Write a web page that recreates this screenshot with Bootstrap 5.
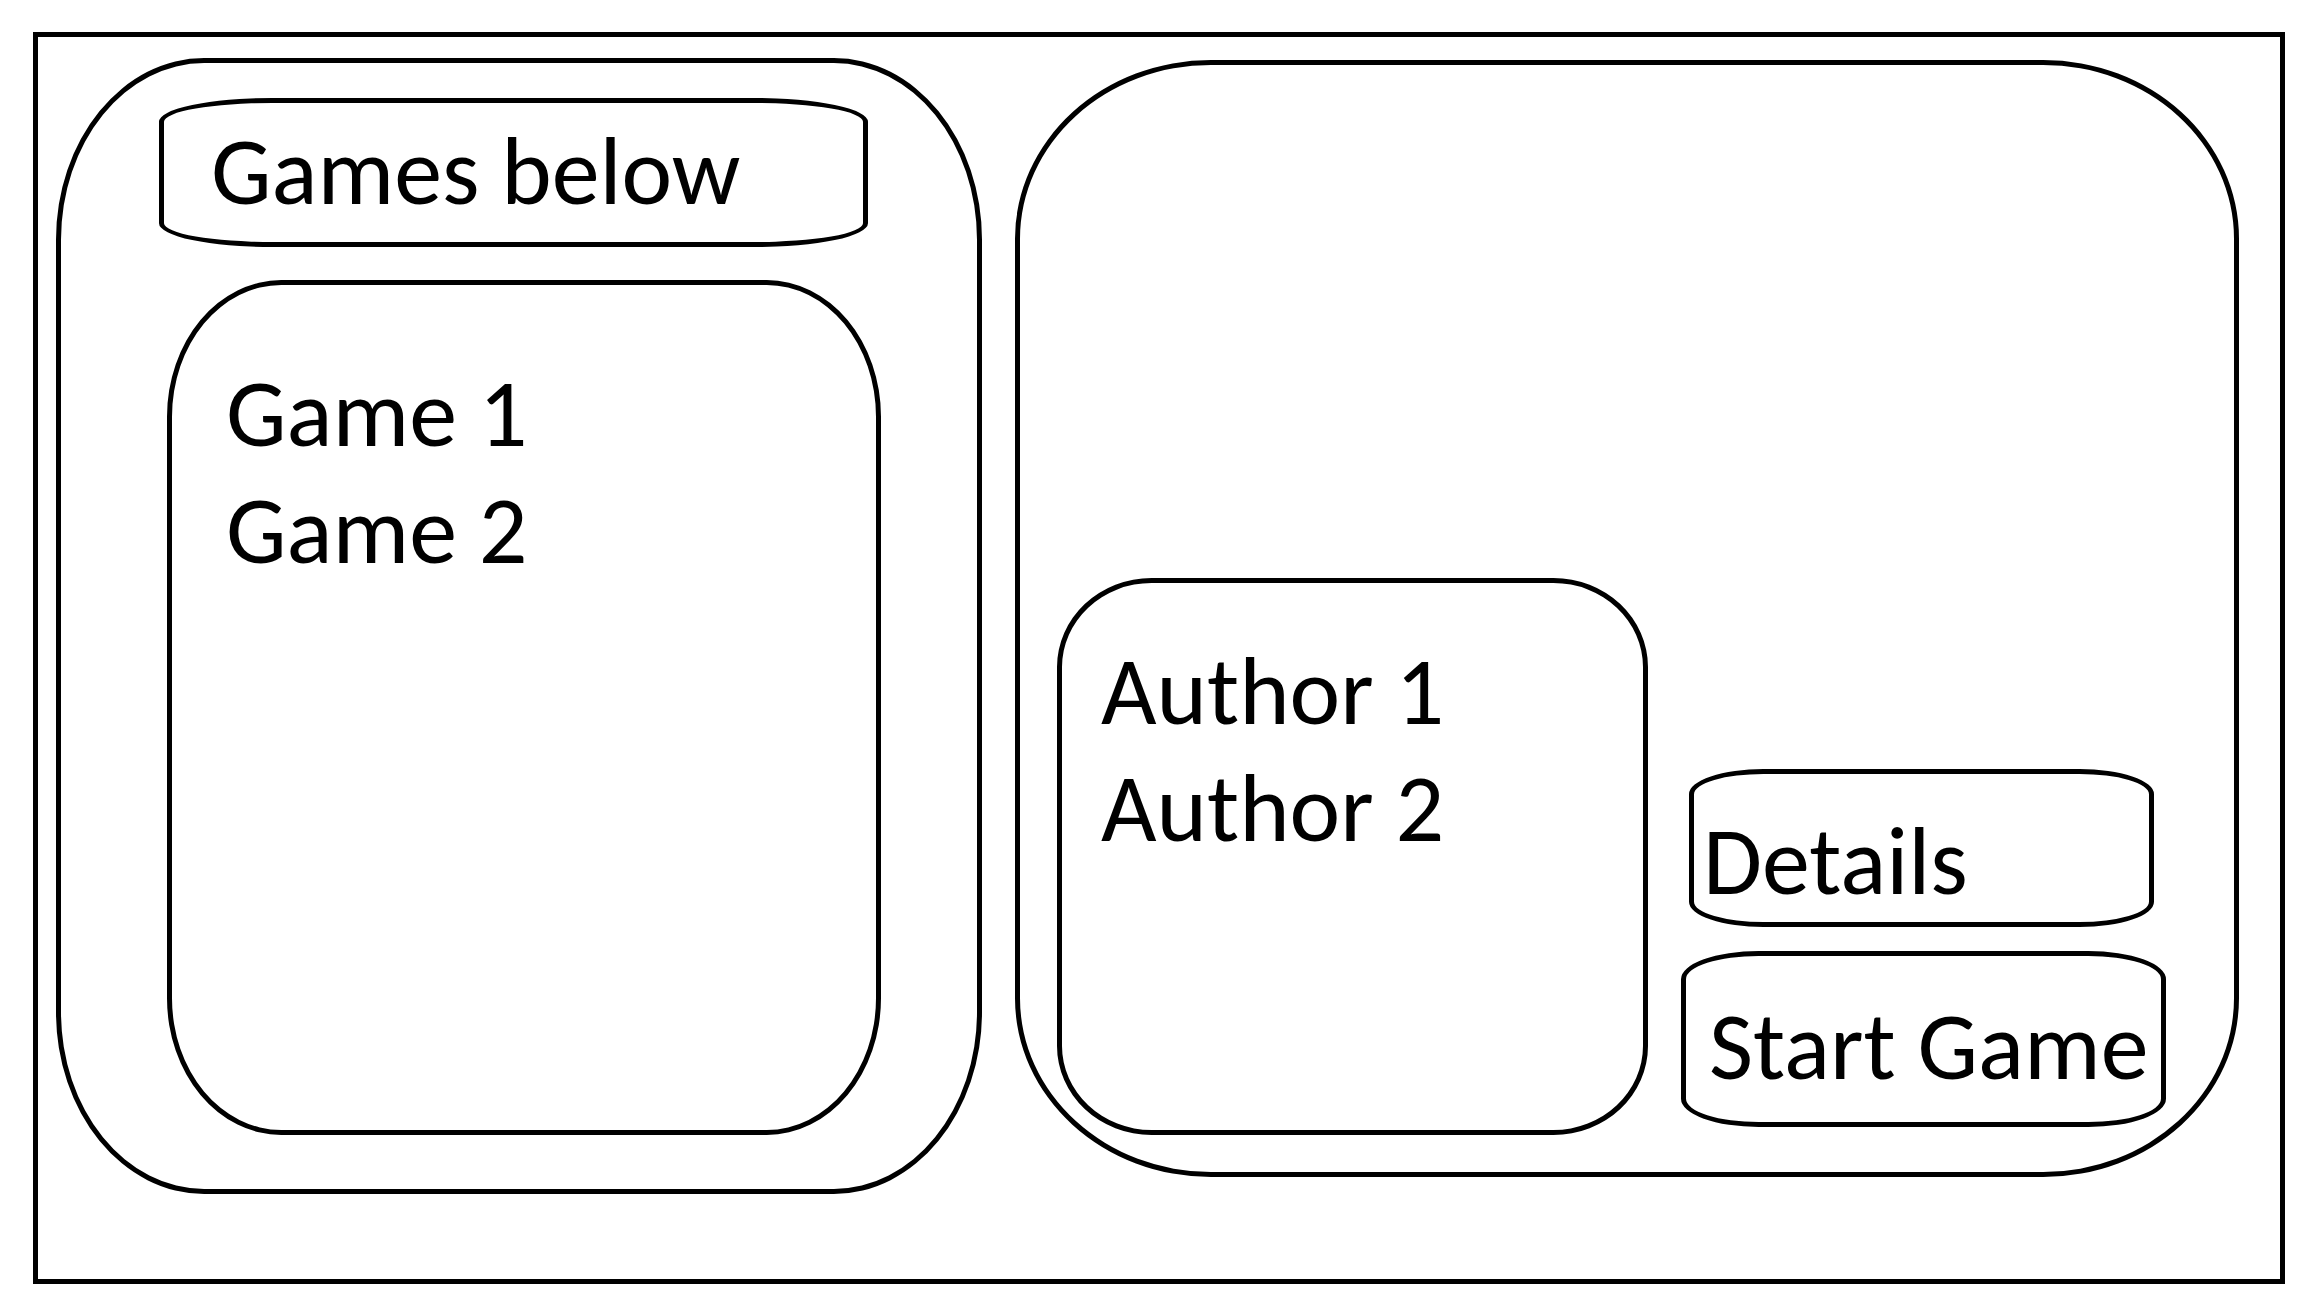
<!DOCTYPE html>
<html lang="en">
<head>
<meta charset="utf-8">
<meta name="viewport" content="width=device-width, initial-scale=1">
<title>Games</title>
<link href="https://cdn.jsdelivr.net/npm/bootstrap@5.3.0/dist/css/bootstrap.min.css" rel="stylesheet">
<style>
  body { font-family: Carlito, Lato, sans-serif; font-size: 96px; line-height: 117px; color: #000; background: #fff; padding: 32px 19px 12px 33px; }
  .outline { border: 5px solid #000; }
  .rounded-sixth { border-radius: 16%; }
  .app-frame { display: grid; grid-template-columns: minmax(0, 926fr) minmax(0, 1224fr); column-gap: 33px; padding: 21px 41px 85px 18px; }
  .games-panel { padding: 35px 96px 54px 98px; gap: 33px; }
  .games-title { font-size: inherit; line-height: inherit; font-weight: 400; margin: 0 13px 0 0; padding: 10px 0 12px 47px; }
  .games-list { margin: 0 0 0 8px; padding: 70px 0 0 54px; }
  .game-panel { display: grid; grid-template-columns: minmax(0, 591fr) minmax(0, 485fr); column-gap: 33px; align-items: end; margin: 2px 0 17px; padding: 0 68px 37px 37px; }
  .authors-list { min-height: 557px; margin: 0; padding: 50px 0 0 39px; }
  .actions { gap: 24px; margin-bottom: 8px; }
  .action { background: #fff; color: #000; text-align: left; white-space: nowrap; }
  .action-details { margin: 0 12px 0 8px; padding: 29px 0 2px 9px; }
  .action-start { padding: 32px 0 17px 23px; }
</style>
</head>
<body class="d-flex flex-column min-vh-100">
  <main class="app-frame outline flex-grow-1">
    <section class="games-panel outline rounded-sixth d-flex flex-column">
      <h1 class="games-title outline rounded-sixth">Games below</h1>
      <ul class="games-list outline rounded-sixth list-unstyled flex-grow-1">
        <li>Game 1</li>
        <li>Game 2</li>
      </ul>
    </section>
    <section class="game-panel outline rounded-sixth">
      <ul class="authors-list outline rounded-sixth list-unstyled">
        <li>Author 1</li>
        <li>Author 2</li>
      </ul>
      <div class="actions d-flex flex-column">
        <button type="button" class="action action-details outline rounded-sixth">Details</button>
        <button type="button" class="action action-start outline rounded-sixth">Start Game</button>
      </div>
    </section>
  </main>
<script src="https://cdn.jsdelivr.net/npm/bootstrap@5.3.0/dist/js/bootstrap.bundle.min.js"></script>
</body>
</html>
